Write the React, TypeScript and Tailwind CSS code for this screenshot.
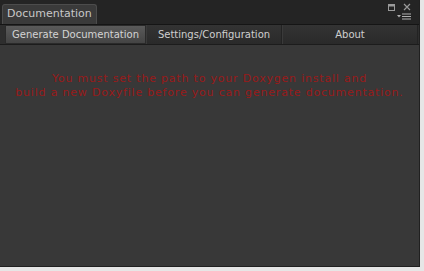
import React from 'react';

const tabs = ['Generate Documentation', 'Settings/Configuration', 'About'];

function WindowIcons() {
  return (
    <div className="flex flex-col items-end pr-[8px] pt-[3px]">
      <div className="flex items-center gap-[8px]">
        <svg width="7" height="7" viewBox="0 0 7 7">
          <rect x="0.5" y="0.5" width="6" height="6" fill="none" stroke="#9a9a9a" />
          <rect x="0.5" y="0.5" width="6" height="2" fill="#9a9a9a" />
        </svg>
        <svg width="8" height="8" viewBox="0 0 8 8">
          <path d="M1 1 L7 7 M7 1 L1 7" stroke="#9a9a9a" strokeWidth="1.2" />
        </svg>
      </div>
      <svg width="14" height="7" viewBox="0 0 14 7" className="mt-[2px]">
        <path d="M0 2 L4 2 L2 4.5 Z" fill="#b0b0b0" />
        <path d="M5 1 H14 M5 3.5 H14 M5 6 H14" stroke="#b0b0b0" strokeWidth="1.2" />
      </svg>
    </div>
  );
}

export default function App() {
  return (
    <div
      className="w-[424px] h-[271px] bg-[#e6e6e6] overflow-hidden"
      style={{ fontFamily: '"DejaVu Sans", Verdana, sans-serif' }}
    >
      <div className="w-[420px] h-[267px] flex flex-col bg-[#383838] border-r border-b border-[#202020]">
        <div className="h-[25px] flex justify-between bg-[#242424] border-b border-[#151515]">
          <div className="flex items-end pl-[2px]">
            <div className="h-[20px] w-[95px] px-[4px] flex items-center rounded-t-[3px] bg-[#3a3a3a] border border-b-0 border-[#4c4c4c] text-[11px] text-[#c8c8c8]">
              Documentation
            </div>
          </div>
          <WindowIcons />
        </div>
        <div className="h-[20px] flex pl-[5px] pr-[1px] bg-[#2e2e2e] border-b border-[#1c1c1c]">
          {tabs.map((t, i) => (
            <div
              key={t}
              className={
                i === 0
                  ? 'w-[141px] flex items-center justify-center bg-gradient-to-b from-[#5a5a5a] to-[#444] border border-[#2a2a2a] text-[10px] text-[#d4d4d4]'
                  : 'flex-1 flex items-center justify-center bg-gradient-to-b from-[#333] to-[#2a2a2a] border-r border-[#232323] border-l border-l-[#3a3a3a] text-[10px] text-[#cfcfcf]'
              }
            >
              {t}
            </div>
          ))}
        </div>
        <div className="flex-1 pt-[27px] text-center text-[11px] leading-[14px] tracking-[0.8px] text-[#981a1a]">
          <p>You must set the path to your Doxygen install and</p>
          <p>build a new Doxyfile before you can generate documentation.</p>
        </div>
      </div>
    </div>
  );
}
